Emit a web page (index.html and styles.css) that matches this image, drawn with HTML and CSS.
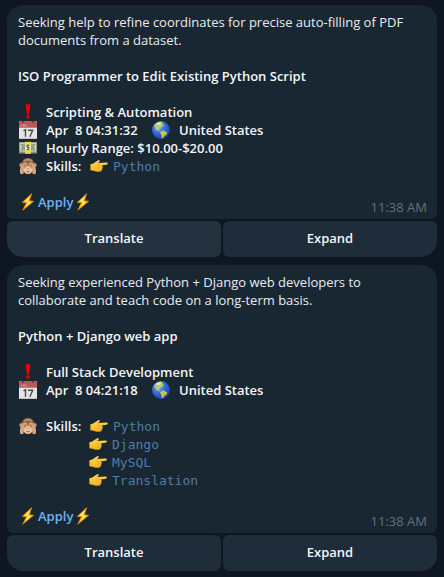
FILE: index.html
```html
<!DOCTYPE html>
<html lang="en">
<head>
<meta charset="utf-8">
<title>Job feed</title>
<link rel="stylesheet" href="styles.css">
</head>
<body>
<svg class="defs" aria-hidden="true">
  <defs>
    <linearGradient id="gold" x1="0" y1="0" x2="0" y2="1"><stop offset="0" stop-color="#ffdc50"/><stop offset="1" stop-color="#f9b023"/></linearGradient>
    <radialGradient id="sea" cx=".35" cy=".3" r=".8"><stop offset="0" stop-color="#7eacf5"/><stop offset=".5" stop-color="#3468dc"/><stop offset="1" stop-color="#173a9c"/></radialGradient>
    <symbol id="bang" viewBox="0 0 18 18"><path d="M6.6 1.5Q9 .7 11.4 1.5L10 11.5H8z" fill="#ec0000"/><ellipse cx="9" cy="14" rx="1.9" ry="1.7" fill="#e00000"/></symbol>
    <symbol id="calendar" viewBox="0 0 18 18"><rect width="18" height="18" rx=".8" fill="#e5e5e5"/><path d="M.8 0h16.4l.8.8v6H0v-6z" fill="#b85a5c"/><path d="M0 16.8h18v.4l-.8.8H.8l-.8-.8z" fill="#c5c5c5"/><path d="M2.8 3.3v2H1.7M4.4 3.3v2h1.3v-2M7 3.3v2h1.2" fill="none" stroke="#dda09e" stroke-width=".7"/><circle cx="4" cy="1" r=".9" fill="#6b2628"/><circle cx="14" cy="1" r=".9" fill="#6b2628"/><path d="M4.5 9.8l2-1.1v7M9 9.2h4.7l-2.8 6.5" fill="none" stroke="#4b4b4b" stroke-width="1.4"/></symbol>
    <symbol id="money" viewBox="0 0 18 18"><path d="M0 3h18v11.5H0z" fill="#8c917c"/><path d="M.8 3.8h16.4v8.8H.8z" fill="#d0d2b8"/><ellipse cx="9" cy="8.3" rx="6.7" ry="3.8" fill="#989d86"/><path d="M2 5h2v1H2zM14 5h2v1h-2zM2 10.5h2v1H2zM14 10.5h2v1h-2z" fill="#777d68"/><path d="M6 2.8h6v12H6z" fill="#f5d33f"/><ellipse cx="9" cy="8.3" rx="2.9" ry="3.8" fill="#f0edc5"/><path d="M10.5 6.3Q7.6 5.4 7.6 7T9 8.3t1.4 1.3-2.9.8M9 5v6.6" fill="none" stroke="#555a37" stroke-width=".9"/></symbol>
    <symbol id="monkey" viewBox="0 0 18 18"><circle cx="2.3" cy="8" r="2" fill="#c99c77"/><circle cx="15.7" cy="8" r="2" fill="#c99c77"/><path d="M9 .9c4 0 6.5 2.7 6.5 7 0 4.8-2.6 9-6.5 9s-6.5-4.2-6.5-9c0-4.3 2.5-7 6.5-7z" fill="#8d6346"/><ellipse cx="9" cy="13" rx="4.4" ry="4" fill="#ebc6a0"/><path d="M8 11.6h.5M9.6 11.6h.5M7.4 14.4q1.6 1 3.2 0" stroke="#704431" stroke-width=".8" fill="none"/><path d="M1.1 16.3C.4 11.3 2.1 6.3 5.1 5.7q3.2-.6 3.4 1.7c.2 2.2-2 3.5-3.1 4.3l-1 5.1q-2.2.9-3.3-.5zM16.9 16.3c.7-5-1-10-4-10.6q-3.2-.6-3.4 1.7c-.2 2.2 2 3.5 3.1 4.3l1 5.1q2.2.9 3.3-.5z" fill="#d3a780"/><path d="M4.4 8.5l3.2-1.2M4.8 10l2.5-1.3M13.6 8.5l-3.2-1.2M13.2 10l-2.5-1.3" stroke="#8b6044" stroke-width=".6"/><path d="M5.2 4.1q3.8-3 7.6 0" stroke="#bd926f" stroke-width="1.6" fill="none"/></symbol>
    <symbol id="globe" viewBox="0 0 18 18"><circle cx="9" cy="9" r="8.9" fill="url(#sea)"/><path d="M2.2 4.2Q4.6.8 8.5.7l2.5.8-1 1.5 1.8.5-.7 1.7-2.2.7-.4 1.7-1.8.4.2 1 1.5.8-.8.5L4.5 9 3 6.5z" fill="#bacb6d"/><path d="M9.2 10l2.5-.4 3.5 1.9-.8 2.3-2 1-1.5 2.5-1.3-.2-.2-3L8 11.8z" fill="#c9c34d"/><path d="M4 3l3.5-1.5 1.7.7-2.6 1.9z" fill="#eef5cb"/></symbol>
    <symbol id="hand" viewBox="0 0 18 18"><path d="M.4 7.2L3.2 6.4 7.8 3.4q1.7-.8 2 .3.2.9-1.8 2.2l8.6-.5q1.3 0 1.3 1.1 0 1-1.3 1.2l-5 .8q1.2.5.9 1.4.6.9-.3 1.7.4 1.1-.7 1.6.1 1.3-1.4 1.4-3.6.4-6.6-.8L.4 13.2z" fill="url(#gold)"/><path d="M8 6.1Q7 7.3 8 8.4l3.6-.1M8.2 10.3q1.7.5 4-.2M7.9 12.1q1.5.4 3.8-.2" fill="none" stroke="#e39a1d" stroke-width=".5"/></symbol>
    <symbol id="bolt" viewBox="0 0 18 18"><path d="M12.6.7L3.2 9.5l4.3.2-3.7 7.5L14.6 8.3l-4.3-.5z" fill="#ffc51d" stroke="#e88a09" stroke-width=".8"/><path d="M10.8 3.5L5.5 8.6l3.7.3-2.7 5L12.2 9 8.5 8.5z" fill="#fff073"/></symbol>
  </defs>
</svg>
<main class="feed">
  <article class="message">
    <div class="bubble">
      <p class="line">Seeking help to refine coordinates for precise auto-filling of PDF</p>
      <p class="line">documents from a dataset.</p>
      <p class="line strong gap">ISO Programmer to Edit Existing Python Script</p>
      <div class="row gap"><svg class="emoji"><use href="#bang"/></svg><span>Scripting &amp; Automation</span></div>
      <div class="row"><svg class="emoji"><use href="#calendar"/></svg><span class="date">Apr  8 04:31:32</span><svg class="emoji"><use href="#globe"/></svg><span>United States</span></div>
      <div class="row"><svg class="emoji"><use href="#money"/></svg><span>Hourly Range: $10.00-$20.00</span></div>
      <div class="row"><svg class="emoji"><use href="#monkey"/></svg><span class="label">Skills:</span><div class="skills"><div class="skill"><svg class="emoji"><use href="#hand"/></svg><code>Python</code></div></div></div>
      <div class="apply gap"><svg class="emoji"><use href="#bolt"/></svg><a>Apply</a><svg class="emoji"><use href="#bolt"/></svg></div>
      <time class="time">11:38 AM</time>
    </div>
    <div class="actions"><div class="button hover">Translate</div><div class="button">Expand</div></div>
  </article>
  <article class="message">
    <div class="bubble">
      <p class="line">Seeking experienced Python + Django web developers to</p>
      <p class="line">collaborate and teach code on a long-term basis.</p>
      <p class="line strong gap">Python + Django web app</p>
      <div class="row gap"><svg class="emoji"><use href="#bang"/></svg><span>Full Stack Development</span></div>
      <div class="row"><svg class="emoji"><use href="#calendar"/></svg><span class="date">Apr  8 04:21:18</span><svg class="emoji"><use href="#globe"/></svg><span>United States</span></div>
      <div class="row gap"><svg class="emoji"><use href="#monkey"/></svg><span class="label">Skills:</span><div class="skills"><div class="skill"><svg class="emoji"><use href="#hand"/></svg><code>Python</code></div><div class="skill"><svg class="emoji"><use href="#hand"/></svg><code>Django</code></div><div class="skill"><svg class="emoji"><use href="#hand"/></svg><code>MySQL</code></div><div class="skill"><svg class="emoji"><use href="#hand"/></svg><code>Translation</code></div></div></div>
      <div class="apply gap"><svg class="emoji"><use href="#bolt"/></svg><a>Apply</a><svg class="emoji"><use href="#bolt"/></svg></div>
      <time class="time">11:38 AM</time>
    </div>
    <div class="actions"><div class="button">Translate</div><div class="button">Expand</div></div>
  </article>
</main>
</body>
</html>
```
FILE: styles.css
```css
* { box-sizing: border-box; }
body {
  margin: 0;
  background: #0e1621;
  color: #f5f5f5;
  font: 13px/18px "Open Sans", sans-serif;
}
.defs { position: absolute; width: 0; height: 0; }
.feed {
  display: flex;
  flex-direction: column;
  gap: 8px;
  padding: 5px 7px 6px;
}
.message { display: flex; flex-direction: column; gap: 2px; }
.bubble {
  position: relative;
  padding: 8px 11px;
  background: #192733;
  border-radius: 16px 16px 6px 6px;
}
.line { margin: 0; height: 18px; white-space: nowrap; color: #e9ecee; }
.line.strong, .row, .button { font-weight: 580; color: #f5f5f5; }
.gap { margin-top: 18px; }
.row {
  display: flex;
  align-items: flex-start;
  gap: 9px;
  padding-left: 1px;
  white-space: pre;
}
.emoji { display: block; flex: none; width: 18px; height: 18px; }
.date { width: 97px; }
.label { width: 34px; }
.skill { display: flex; gap: 5px; height: 18px; }
.skill:first-child { padding-left: 1px; }
code {
  font: 400 13px/20px "DejaVu Sans Mono", monospace;
  color: #4f7ca5;
}
.apply { display: flex; padding-left: 1px; }
.apply a { width: 37px; padding-left: 1px; color: #6ab3f3; font-weight: 540; }
.time {
  position: absolute;
  right: 10px;
  bottom: 3px;
  color: #64717e;
}
.actions { display: grid; grid-template-columns: 1fr 1fr; gap: 2px; }
.button {
  height: 36px;
  line-height: 35px;
  text-align: center;
  background: #1f2c39;
  border-radius: 6px;
}
.button:first-child { border-bottom-left-radius: 16px; }
.button:last-child { border-bottom-right-radius: 16px; }
.button.hover { background: #243240; }
```
